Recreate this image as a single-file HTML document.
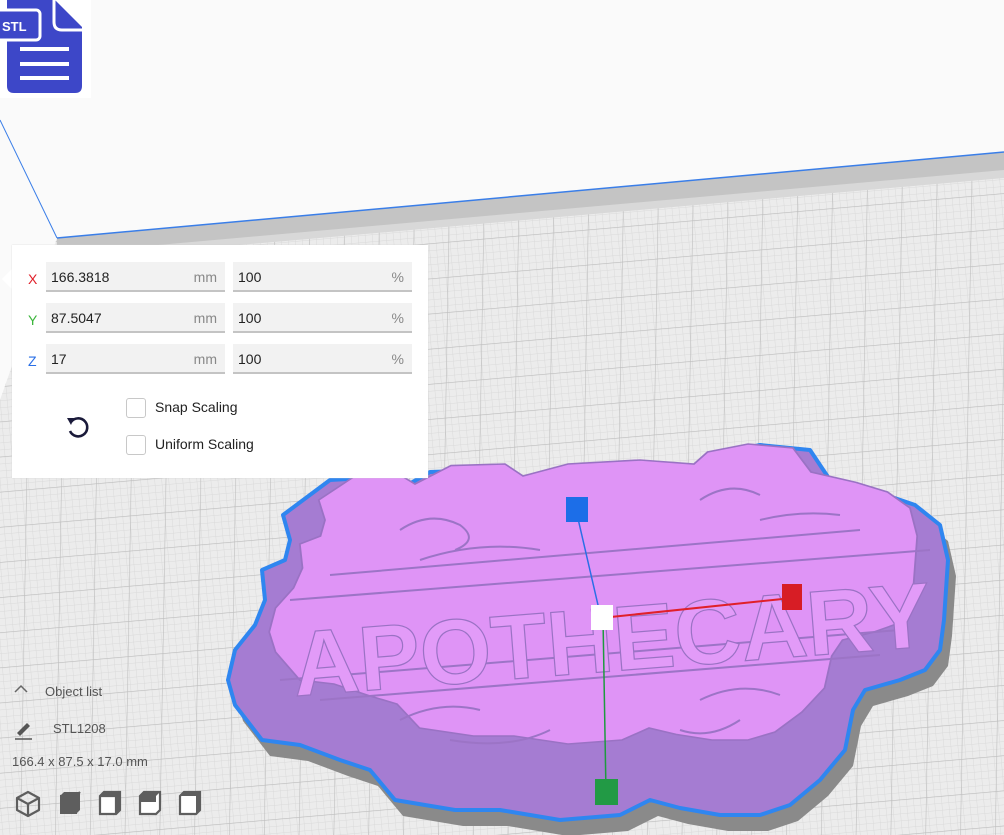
<!DOCTYPE html>
<html><head><meta charset="utf-8"><style>
body{margin:0;width:1004px;height:835px;overflow:hidden;background:#fafafa;font-family:"Liberation Sans",sans-serif;position:relative}
svg.bg{position:absolute;left:0;top:0}
.panel{position:absolute;left:12px;top:245px;width:416px;height:233px;background:#fff;box-shadow:0 0 1px #ccc}
.arrow{position:absolute;left:2px;top:268px;width:0;height:0;border-top:11px solid transparent;border-bottom:11px solid transparent;border-right:11px solid #fff}
.lbl{position:absolute;font-size:14px}
.f{position:absolute;height:30px;background:#f2f2f2;border-bottom:2px solid #c4c4c4;font-size:14px;color:#222;line-height:31px;box-sizing:border-box;padding-left:5px}
.f span{position:absolute;right:8px;color:#888}
.cb{position:absolute;left:126px;width:18px;height:18px;border:1px solid #c8c8c8;border-radius:3px;background:#fff}
.ct{position:absolute;left:155px;font-size:14px;color:#222}
.bl{position:absolute;font-size:13px;color:#555}
</style></head><body>
<svg class="bg" width="1004" height="835" viewBox="0 0 1004 835">
<defs>
<pattern id="fine" width="7" height="7" patternUnits="userSpaceOnUse" patternTransform="rotate(-5)">
<path d="M0 0H7M0 0V7" stroke="#dadada" stroke-width="1"/></pattern>
<pattern id="maj" width="35" height="35" patternUnits="userSpaceOnUse" patternTransform="rotate(-5) skewX(-6)">
<path d="M0 0H35M0 0V35" stroke="#bdbdbd" stroke-width="1.2"/></pattern>
<clipPath id="plate"><polygon points="57,238 1004,152 1004,835 0,835 0,400"/></clipPath>
<path id="shape" d="M283,515 L330,480 L365,478 L390,495 L430,472 L490,470 L510,485 L560,470 L640,465 L700,470 L715,455 L760,445 L810,450 L830,480 L880,493 L915,505 L940,525 L948,560 L944,620 L940,650 L925,670 L900,680 L865,690 L853,710 L845,750 L820,780 L790,805 L760,815 L720,815 L680,808 L650,800 L620,815 L560,820 L500,810 L455,810 L395,800 L370,770 L340,760 L300,745 L262,740 L235,705 L228,680 L235,650 L255,625 L265,600 L262,570 L285,560 L290,540 Z"/>
</defs>
<line x1="0" y1="120" x2="57" y2="238" stroke="#3a7ee8" stroke-width="1"/>
<g clip-path="url(#plate)">
<rect width="1004" height="835" fill="#ececec"/>
<rect width="1004" height="835" fill="url(#fine)"/>
<rect width="1004" height="835" fill="url(#maj)"/>
<polygon points="57,238 1004,152 1004,172 57,256" fill="#c4c4c4"/>
<polygon points="57,254 1004,170 1004,178 57,261" fill="#d8d8d8"/>
</g>
<line x1="57" y1="238" x2="1004" y2="152" stroke="#3a7ee8" stroke-width="1.5"/>
<use href="#shape" transform="translate(8,16)" fill="#8a8a8a"/>
<use href="#shape" fill="#a57cd2" stroke="#2f86f0" stroke-width="4" stroke-linejoin="round"/>
<use href="#shape" transform="translate(595,600) scale(0.9,0.8) translate(-590,-640)" fill="#df94f6" stroke="#9a72c4" stroke-width="2"/>
<g fill="none" stroke="#9c74c6" stroke-width="2">
<path d="M330,575 L860,530 M290,600 L930,550 M280,680 L900,630 M320,700 L880,655"/>
<path d="M400,530 q30,-20 60,-5 q20,15 -5,25 M420,560 q60,-20 120,-10 M700,500 q30,-20 60,-5 M760,520 q40,-10 80,-5 M400,720 q40,-20 80,-10 M450,740 q60,10 100,-10 M700,700 q40,-20 80,-5 M740,720 q-30,20 -60,10"/>
</g>
<g transform="rotate(-4.5 600 620)">
<text x="290" y="672" font-family="Liberation Sans" font-weight="bold" font-size="92" textLength="640" lengthAdjust="spacingAndGlyphs" fill="#e29bf8" stroke="#9a72c4" stroke-width="1.2">APOTHECARY</text>
</g>
<line x1="576" y1="510" x2="601" y2="618" stroke="#2a6fe6" stroke-width="1.5"/>
<line x1="601" y1="618" x2="792" y2="598" stroke="#e0202a" stroke-width="2"/>
<line x1="603" y1="618" x2="606" y2="793" stroke="#1e9a3f" stroke-width="1.5"/>
<rect x="566" y="497" width="22" height="25" fill="#1c6ee8"/>
<rect x="591" y="605" width="22" height="25" fill="#fff"/>
<rect x="782" y="584" width="20" height="26" fill="#d71d25"/>
<rect x="595" y="779" width="23" height="26" fill="#229a45"/>
<rect x="0" y="0" width="91" height="98" fill="#fff"/>
<path d="M7,0 H55 L82,27 V86 Q82,93 75,93 H14 Q7,93 7,86 Z" fill="#3d47c8"/>
<path d="M54,0 V22 Q54,30 62,30 H82" fill="none" stroke="#fff" stroke-width="3"/>
<rect x="-4" y="10" width="44" height="30" rx="4" fill="#3d47c8" stroke="#fff" stroke-width="3"/>
<text x="2" y="31" font-family="Liberation Sans" font-weight="bold" font-size="13" fill="#fff">STL</text>
<path d="M20,49 H69 M20,64 H69 M20,78 H69" stroke="#fff" stroke-width="4"/>
</svg>
<div class="arrow"></div>
<div class="panel"></div>
<div class="lbl" style="left:28px;top:271px;color:#e0202a">X</div>
<div class="lbl" style="left:28px;top:312px;color:#3bb53b">Y</div>
<div class="lbl" style="left:28px;top:353px;color:#2a6fe6">Z</div>
<div class="f" style="left:46px;top:262px;width:179px">166.3818<span>mm</span></div>
<div class="f" style="left:233px;top:262px;width:179px">100<span>%</span></div>
<div class="f" style="left:46px;top:303px;width:179px">87.5047<span>mm</span></div>
<div class="f" style="left:233px;top:303px;width:179px">100<span>%</span></div>
<div class="f" style="left:46px;top:344px;width:179px">17<span>mm</span></div>
<div class="f" style="left:233px;top:344px;width:179px">100<span>%</span></div>
<div class="cb" style="top:398px"></div><div class="ct" style="top:399px">Snap Scaling</div>
<div class="cb" style="top:435px"></div><div class="ct" style="top:436px">Uniform Scaling</div>
<svg style="position:absolute;left:64px;top:413px" width="28" height="28" viewBox="0 0 28 28"><path d="M7,9 A9,9 0 1 1 6,18" fill="none" stroke="#1a1a3a" stroke-width="2.6"/><path d="M3,5 L10,5 L7,12 Z" fill="#1a1a3a"/></svg>
<svg style="position:absolute;left:13px;top:683px" width="16" height="12"><path d="M2,9 L8,3 L14,9" fill="none" stroke="#666" stroke-width="1.5"/></svg>
<div class="bl" style="left:45px;top:684px">Object list</div>
<svg style="position:absolute;left:14px;top:720px" width="20" height="20"><path d="M3,13 L13,3 L16,6 L6,16 Z" fill="#555"/><path d="M1,19 H18" stroke="#555" stroke-width="1.5"/></svg>
<div class="bl" style="left:53px;top:721px">STL1208</div>
<div class="bl" style="left:12px;top:754px">166.4 x 87.5 x 17.0 mm</div>
<svg style="position:absolute;left:14px;top:790px" width="190" height="28">
<g fill="none" stroke="#5e5e5e" stroke-width="2.2" stroke-linejoin="round">
<path d="M14,2 L25,8 V20 L14,26 L3,20 V8 Z M3,8 L14,14 L25,8 M14,14 V26"/>
</g>
<g fill="#5e5e5e"><path d="M46,6 L50,2 H66 V20 L62,24 H46 Z"/></g>
<g fill="none" stroke="#5e5e5e" stroke-width="2.2"><path d="M62,24 V6 H46 M62,6 L66,2"/></g>
<g transform="translate(40,0)"><path d="M46,6 L50,2 H66 V20 L62,24 H46 Z" fill="#fff" stroke="#5e5e5e" stroke-width="2.2"/><path d="M46,6 H62 V24 M62,6 L66,2" fill="none" stroke="#5e5e5e" stroke-width="2.2"/><path d="M46,6 L50,2 H66 L62,6 Z" fill="#5e5e5e"/><path d="M62,6 L66,2 V20 L62,24 Z" fill="#5e5e5e"/></g>
<g transform="translate(80,0)"><path d="M46,6 L50,2 H66 V20 L62,24 H46 Z" fill="#fff" stroke="#5e5e5e" stroke-width="2.2"/><path d="M46,6 L50,2 H66 L62,6 H46 V12 H62 V6" fill="#5e5e5e"/></g>
<g transform="translate(120,0)"><path d="M46,6 L50,2 H66 V20 L62,24 H46 Z" fill="#fff" stroke="#5e5e5e" stroke-width="2.2"/><path d="M46,6 L50,2 H66 L62,6 Z M62,6 L66,2 V20 L62,24 Z" fill="#5e5e5e"/></g>
</svg>
</body></html>
